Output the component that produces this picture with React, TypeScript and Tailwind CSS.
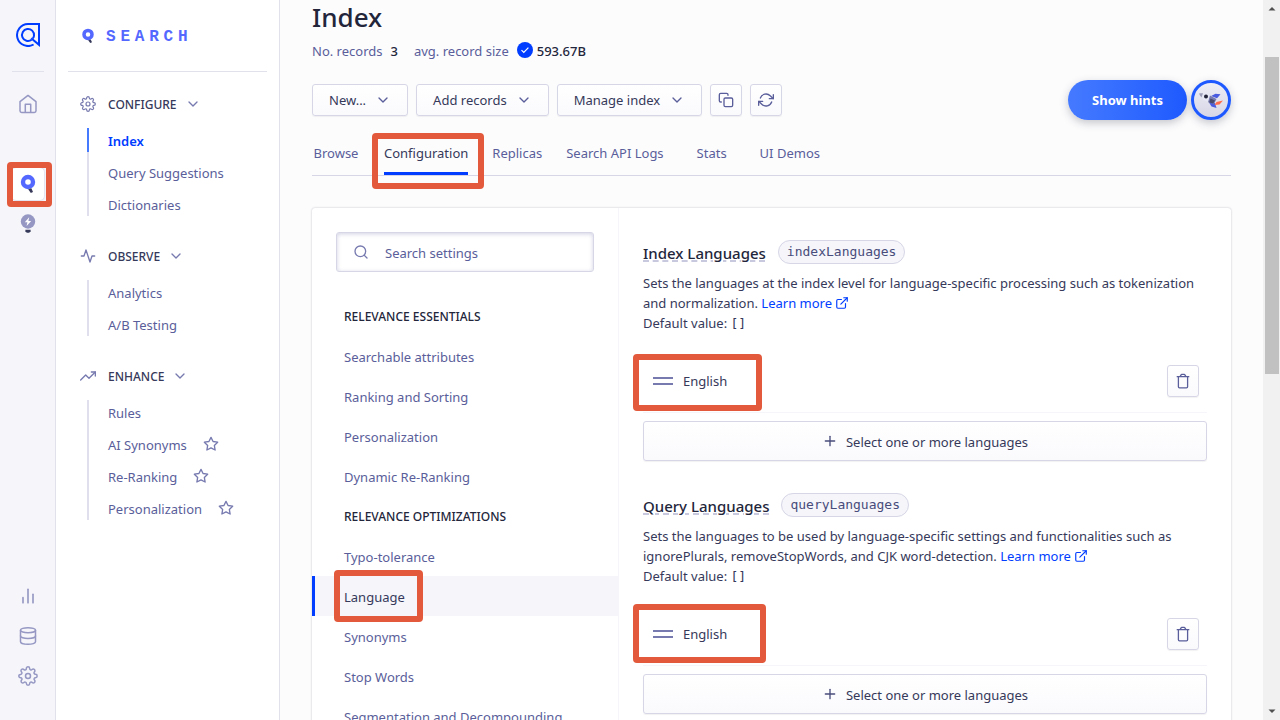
import type { ReactNode } from "react";
import {
  FiActivity,
  FiBarChart2,
  FiChevronDown,
  FiCopy,
  FiDatabase,
  FiExternalLink,
  FiPlus,
  FiRefreshCw,
  FiSearch,
  FiSettings,
  FiStar,
  FiTrendingUp,
} from "react-icons/fi";

function Highlight({ className }: { className: string }) {
  return (
    <span
      aria-hidden="true"
      className={`pointer-events-none absolute z-10 rounded-[4px] border-6 border-[#e2593b] ${className}`}
    />
  );
}

function BrandMark() {
  return (
    <svg viewBox="0 0 24 24" className="size-6" fill="none" stroke="#003dff" strokeWidth="2">
      <path d="M17.6 21.5A11 11 0 1 1 12 1H23V21.8L15.2 15.2" strokeLinejoin="miter" />
      <path d="M15.6 16.8A6 6 0 1 1 18 12.6C17.9 13.7 17.5 14.6 16.8 15.5" />
    </svg>
  );
}

function SearchMark({ className }: { className: string }) {
  return (
    <svg viewBox="0 0 16 20" className={className}>
      <circle cx="8" cy="8" r="5" fill="none" stroke="#5468ff" strokeWidth="4.4" />
      <path d="M8.2 15.2l3.2-.9 1.6 3.6-2.2 1z" fill="#36395a" />
    </svg>
  );
}

function BulbMark() {
  return (
    <svg viewBox="0 0 16 20" className="h-5 w-4">
      <circle cx="8" cy="7.5" r="7.2" fill="#9698c3" />
      <path d="M9.2 3.2L4.8 8.2h2.6l-.8 3.8 4.6-5H8.4z" fill="#fff" />
      <path d="M5.4 15.8h5.2v1.4L9.2 18.8H6.8l-1.4-1.6z" fill="#36395a" />
    </svg>
  );
}

function HomeIcon() {
  return (
    <svg viewBox="0 0 20 20" className="size-5" fill="none" stroke="#9698c3" strokeWidth="1.5" strokeLinejoin="round">
      <path d="M2 7.7L10 1.4l8 6.3v9a1.7 1.7 0 0 1-1.7 1.7H3.7A1.7 1.7 0 0 1 2 16.7z" />
      <path d="M7.3 18.4V10.2h5.4v8.2" />
    </svg>
  );
}

function TrashIcon() {
  return (
    <svg viewBox="0 0 16 16" className="size-4" fill="none" stroke="#5a5e9a" strokeWidth="1.3" strokeLinejoin="round" strokeLinecap="round">
      <path d="M2.2 3.7h11.6M3.4 3.7v10a1.1 1.1 0 0 0 1.1 1.1h7a1.1 1.1 0 0 0 1.1-1.1v-10M5.2 3.4l.9-1.5a.8.8 0 0 1 .7-.5h2.4a.8.8 0 0 1 .7.5l.9 1.5" />
    </svg>
  );
}

function Rocket() {
  return (
    <svg viewBox="0 0 28 20" className="h-5 w-7 shrink-0">
      <path d="M14 6l4.500-2.300 5 .5-3.500 4z" fill="#4a5be0" />
      <path d="M12 12.500l2.500 4 5 1.500-1.500-5z" fill="#4a5be0" />
      <path d="M2 3.500c4.500-1 9-.3 12.500 2L11.500 12C7 11 3.500 7.500 2 3.500z" fill="#e6e7f4" />
      <path d="M2 3.500c1.300-.3 2.600-.4 4-.3L4.500 7.500C3.400 6.300 2.500 4.900 2 3.500z" fill="#9c9eb8" />
      <path d="M13 5.500l6.500 3.500-2.500 5-6-1.800z" fill="#777aaf" />
      <path d="M13.500 8.500l4.500 2-1.800 3-4-1z" fill="#484b6e" />
      <path d="M19.500 12l6.500-1.500-3.500 4-5 .5z" fill="#ff6b4a" />
      <circle cx="9" cy="6.500" r="2" fill="#23263b" />
    </svg>
  );
}

function IconRail() {
  return (
    <nav aria-label="Products" className="flex w-14 shrink-0 flex-col items-center border-r border-[#e1e1ec] bg-[#f5f5fa]">
      <a href="#brand" aria-label="Dashboard" className="flex h-[71px] items-center pb-0.5">
        <BrandMark />
      </a>
      <div className="h-px w-8 bg-[#e1e1ec]" />
      <a href="#home" aria-label="Home" className="mt-3 flex size-10 items-center justify-center">
        <HomeIcon />
      </a>
      <a href="#search" aria-label="Search" className="relative mt-10 flex size-10 items-center justify-center">
        <span className="flex size-8 items-center justify-center rounded-sm bg-white shadow-[0_0_2px_#b6b7d5]">
          <SearchMark className="h-5 w-4" />
        </span>
        <Highlight className="-top-0.5 -right-1 -bottom-[3px] -left-px" />
      </a>
      <a href="#recommend" aria-label="Recommend" className="flex size-10 items-center justify-center">
        <BulbMark />
      </a>
      <div className="mt-auto flex flex-col pb-6 text-[#9698c3]">
        <a href="#usage" aria-label="Usage" className="flex size-10 items-center justify-center">
          <FiBarChart2 size={20} />
        </a>
        <a href="#data" aria-label="Data sources" className="flex size-10 items-center justify-center">
          <FiDatabase size={20} strokeWidth={1.8} />
        </a>
        <a href="#settings" aria-label="Settings" className="flex size-10 items-center justify-center">
          <FiSettings size={20} strokeWidth={1.8} />
        </a>
      </div>
    </nav>
  );
}

type SideItem = { label: string; star?: boolean; active?: boolean };

function SideSection({ icon, title, items }: { icon: ReactNode; title: string; items: SideItem[] }) {
  return (
    <section className="mb-4">
      <button type="button" className="flex h-12 items-center text-xs font-medium text-[#36395a]">
        <span className="flex w-7 text-[#777aaf]">{icon}</span>
        <span className="pt-0.5">{title}</span>
        <FiChevronDown size={16} className="ml-2 text-[#777aaf]" />
      </button>
      <ul className="relative ml-2 flex flex-col gap-2 before:absolute before:inset-y-0 before:left-[-1px] before:w-0.5 before:bg-[#dfdfed]">
        {items.map((item) => (
          <li
            key={item.label}
            className={
              item.active
                ? "relative h-6 font-semibold text-[#003dff] before:absolute before:inset-y-0 before:left-[-1px] before:w-0.5 before:bg-[#457aff]"
                : "h-6 text-[#5a5e9a]"
            }
          >
            <a href={`#${item.label}`} className="flex h-6 items-center pt-1 pl-5">
              {item.label}
              {item.star && <FiStar size={16} strokeWidth={2} className="mb-1 ml-4 text-[#777aaf]" />}
            </a>
          </li>
        ))}
      </ul>
    </section>
  );
}

function Sidebar() {
  return (
    <aside className="flex w-56 shrink-0 flex-col border-r border-[#e1e1ec] bg-white px-3">
      <div className="flex h-[72px] items-center gap-2.5 border-b border-[#e1e1ec] pl-3 font-['Liberation_Mono',monospace] text-base font-bold tracking-[0.3em] text-[#5468ff]">
        <SearchMark className="h-4 w-4" />
        <span className="pt-0.5">SEARCH</span>
      </div>
      <div className="pt-2 pl-3">
        <SideSection
          icon={<FiSettings size={16} strokeWidth={1.8} />}
          title="CONFIGURE"
          items={[{ label: "Index", active: true }, { label: "Query Suggestions" }, { label: "Dictionaries" }]}
        />
        <SideSection
          icon={<FiActivity size={16} strokeWidth={2} />}
          title="OBSERVE"
          items={[{ label: "Analytics" }, { label: "A/B Testing" }]}
        />
        <SideSection
          icon={<FiTrendingUp size={16} strokeWidth={2} />}
          title="ENHANCE"
          items={[
            { label: "Rules" },
            { label: "AI Synonyms", star: true },
            { label: "Re-Ranking", star: true },
            { label: "Personalization", star: true },
          ]}
        />
      </div>
    </aside>
  );
}

const raised =
  "flex items-center justify-center rounded-[3px] border border-[#d6d6e7] bg-linear-to-b from-white to-[#fafafd] shadow-[0_1px_1px_rgba(35,38,59,0.06)]";

function MenuButton({ children }: { children: ReactNode }) {
  return (
    <button type="button" className={`${raised} h-8 gap-[9px] px-4 text-[#36395a]`}>
      <span className="pt-0.5">{children}</span>
      <FiChevronDown size={16} className="text-[#5a5e9a]" />
    </button>
  );
}

const tabs = ["Browse", "Configuration", "Replicas", "Search API Logs", "Stats", "UI Demos"];

function PageHeader() {
  return (
    <header>
      <h1 className="h-9 text-[26px] leading-[34px] font-medium text-[#23263b]">Index</h1>
      <div className="flex h-8 items-center text-[#5a5e9a]">
        No. records
        <span className="ml-2 font-medium text-[#23263b]">3</span>
        <span className="ml-4">avg. record size</span>
        <svg viewBox="0 0 16 16" className="mr-1 mb-1 ml-2 size-4">
          <circle cx="8" cy="8" r="8" fill="#003dff" />
          <path d="M4.5 8.2l2.3 2.3 4.6-4.8" fill="none" stroke="#fff" strokeWidth="1.2" />
        </svg>
        <span className="font-medium text-[#23263b]">593.67B</span>
      </div>
      <div className="mt-3 flex h-10 items-center gap-2">
        <MenuButton>New...</MenuButton>
        <MenuButton>Add records</MenuButton>
        <MenuButton>Manage index</MenuButton>
        <button type="button" aria-label="Copy" className={`${raised} size-8 text-[#5a5e9a]`}>
          <FiCopy size={16} strokeWidth={2} />
        </button>
        <button type="button" aria-label="Refresh" className={`${raised} size-8 text-[#5a5e9a]`}>
          <FiRefreshCw size={16} strokeWidth={2} />
        </button>
        <button
          type="button"
          className="ml-auto h-10 rounded-full bg-linear-to-r from-[#457aff] to-[#1e59ff] px-6 pt-0.5 font-bold text-white shadow-[0_3px_8px_rgba(35,38,59,0.25)]"
        >
          Show hints
        </button>
        <button
          type="button"
          aria-label="Onboarding"
          className="-ml-1 flex size-10 items-center justify-center rounded-full border-[3px] border-[#1e59ff] bg-linear-to-b from-[#eeeef6] to-[#d6d6e7] shadow-[0_3px_8px_rgba(35,38,59,0.25)]"
        >
          <Rocket />
        </button>
      </div>
      <nav aria-label="Index sections" className="mt-2 flex h-12 gap-6 border-b border-[#d6d6e7] text-[#5a5e9a]">
        {tabs.map((tab) =>
          tab === "Configuration" ? (
            <a key={tab} href="#configuration" className="relative border-b-3 border-[#003dff] leading-[50px] text-[#36395a]">
              {tab}
              <Highlight className="top-[5px] -right-4 bottom-[-17px] -left-3" />
            </a>
          ) : (
            <a key={tab} href={`#${tab}`} className="min-w-12 text-center leading-[50px]">
              {tab}
            </a>
          ),
        )}
      </nav>
    </header>
  );
}

const settings = [
  { title: "RELEVANCE ESSENTIALS", items: ["Searchable attributes", "Ranking and Sorting", "Personalization", "Dynamic Re-Ranking"] },
  {
    title: "RELEVANCE OPTIMIZATIONS",
    items: ["Typo-tolerance", "Language", "Synonyms", "Stop Words", "Segmentation and Decompounding"],
  },
];

function SettingsNav() {
  return (
    <div className="w-[307px] shrink-0 border-r border-[#f5f5fa]">
      <label className="mx-6 mt-6 mb-6 flex h-10 items-center gap-4 rounded-[3px] border border-[#d6d6e7] px-4 shadow-[inset_0_1px_4px_rgba(119,122,175,0.35)]">
        <FiSearch size={16} className="text-[#777aaf]" />
        <input
          type="search"
          aria-label="Search settings"
          placeholder="Search settings"
          className="min-w-0 flex-1 bg-transparent pt-1 outline-none placeholder:text-[#5a5e9a]"
        />
      </label>
      {settings.map((group) => (
        <section key={group.title}>
          <h2 className="h-10 pl-8 text-xs leading-[42px] font-medium text-[#23263b]">{group.title}</h2>
          <ul>
            {group.items.map((item) =>
              item === "Language" ? (
                <li key={item} className="h-10 border-l-3 border-[#003dff] bg-[#f5f5fa] pl-[29px] text-[#36395a]">
                  <a href="#language" className="relative inline-block h-10 leading-[42px] whitespace-nowrap">
                    {item}
                    <Highlight className="-inset-y-1.5 -right-[18px] -left-2.5" />
                  </a>
                </li>
              ) : (
                <li key={item} className="pl-8 text-[#5a5e9a]">
                  <a href={`#${item}`} className="block h-10 leading-[42px] whitespace-nowrap">
                    {item}
                  </a>
                </li>
              ),
            )}
          </ul>
        </section>
      ))}
    </div>
  );
}

type LanguageSettingProps = { title: string; param: string; children: ReactNode; highlight: string };

function LanguageSetting({ title, param, children, highlight }: LanguageSettingProps) {
  return (
    <section className="mb-8 text-[#36395a]">
      <div className="flex h-6 items-center gap-3">
        <h2 className="pt-0.5 text-[15px] font-medium text-[#23263b] underline decoration-[#b6b7d5] decoration-dashed underline-offset-2">
          {title}
        </h2>
        <code className="flex h-6 items-center rounded-full border border-[#d6d6e7] bg-[#f5f5fa] px-2 font-['DejaVu_Sans_Mono',monospace] text-[13px] text-[#484c7a]">
          {param}
        </code>
      </div>
      <p className="mt-[9px] leading-5">
        {children}{" "}
        <a href="#learn" className="whitespace-nowrap text-[#003dff]">
          Learn more <FiExternalLink size={14} className="inline align-[-2px]" />
        </a>
        <br />
        Default value: <code className="font-['DejaVu_Sans_Mono',monospace] text-[13px]">[]</code>
      </p>
      <div className="mt-[15px] flex h-16 items-center border-b border-[#f5f5fa] px-2">
        <div className="relative flex h-10 items-center gap-2.5 pl-0.5">
          <span className="h-2 w-5 border-y-2 border-[#777aaf]" />
          <span className="pt-0.5">English</span>
          <Highlight className={highlight} />
        </div>
        <button type="button" aria-label="Remove English" className={`${raised} ml-auto size-8`}>
          <TrashIcon />
        </button>
      </div>
      <button type="button" className={`${raised} mt-2 h-10 w-full gap-2 text-[#36395a]`}>
        <FiPlus size={16} className="text-[#484c7a]" />
        <span className="pt-1">Select one or more languages</span>
      </button>
    </section>
  );
}

function Scrollbar() {
  return (
    <div aria-hidden="true" className="flex w-[17px] shrink-0 flex-col items-end bg-[#f1f1f1]">
      <svg viewBox="0 0 16 16" className="size-4 shrink-0">
        <path d="M4.5 10.5h7L8 7z" fill="#505050" />
      </svg>
      <div className="flex w-full flex-1 flex-col items-end pr-px">
        <div className="h-[6%]" />
        <div className="h-[46%] w-3.5 bg-[#c1c1c1]" />
      </div>
      <svg viewBox="0 0 16 16" className="size-4 shrink-0">
        <path d="M4.5 5.5h7L8 9z" fill="#505050" />
      </svg>
    </div>
  );
}

export default function App() {
  return (
    <div className="flex h-screen overflow-hidden bg-[#fcfcfd] font-['Noto_Sans',sans-serif] text-[13px]">
      <IconRail />
      <Sidebar />
      <main className="min-w-0 flex-1 overflow-hidden px-8">
        <PageHeader />
        <div className="mt-8 flex rounded-[3px] bg-white shadow-[0_0_2px_rgba(35,38,59,0.3)]">
          <SettingsNav />
          <div className="min-w-0 flex-1 px-6 pt-8">
            <LanguageSetting title="Index Languages" param="indexLanguages" highlight="-top-[7px] -bottom-2.5 -left-[18px] -right-[35px]">
              Sets the languages at the index level for language-specific processing such as tokenization and normalization.
            </LanguageSetting>
            <LanguageSetting title="Query Languages" param="queryLanguages" highlight="-top-2.5 -bottom-[9px] -left-[18px] -right-[39px]">
              Sets the languages to be used by language-specific settings and functionalities such as ignorePlurals,
              removeStopWords, and CJK word-detection.
            </LanguageSetting>
          </div>
        </div>
      </main>
      <Scrollbar />
    </div>
  );
}
